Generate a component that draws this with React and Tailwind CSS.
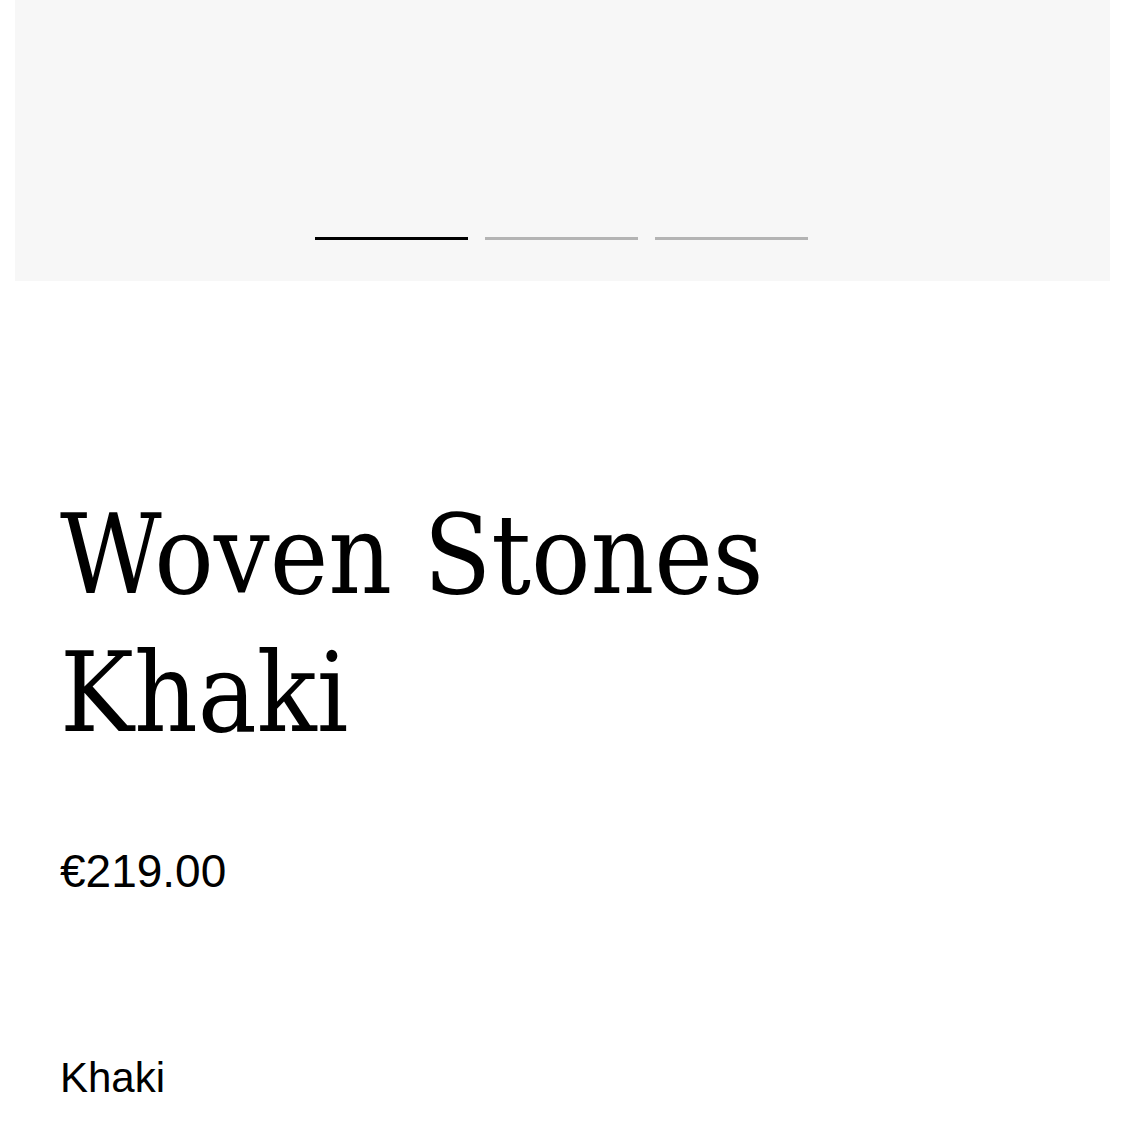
import React from "react";

function App() {
  const slides = [true, false, false];

  return (
    <div className="min-h-screen bg-white" style={{ fontFamily: '"Liberation Sans", Arial, sans-serif' }}>
      {/* Gallery */}
      <div className="mx-[15px] h-[281px] bg-[#f7f7f7] flex justify-center pt-[237px] pr-[2px]">
        <div className="flex gap-[17px] h-[3px]">
          {slides.map((active, i) => (
            <div
              key={i}
              className={`w-[153px] h-[3px] ${active ? "bg-black" : "bg-[#b4b4b4]"}`}
            />
          ))}
        </div>
      </div>

      {/* Product info */}
      <div className="px-[60px] pt-[205px]">
        <h1 className="font-['DejaVu_Serif_Condensed','Liberation_Serif',serif] text-[110px] leading-[138px] text-black">
          Woven Stones
          <br />
          Khaki
        </h1>
        <p className="mt-[83px] text-[46px] leading-[52px] text-black">€219.00</p>
        <p className="mt-[157px] text-[42px] leading-[48px] text-black">Khaki</p>
      </div>
    </div>
  );
}

export default App;
